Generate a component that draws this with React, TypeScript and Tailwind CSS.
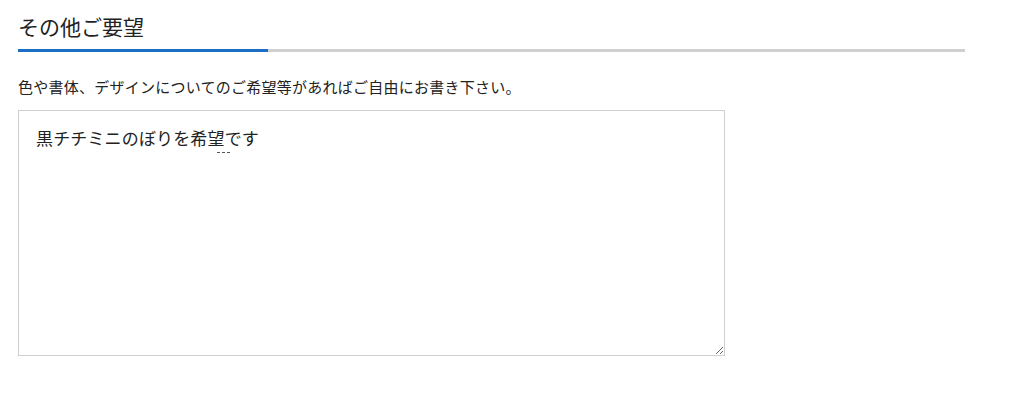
export default function App() {
  const jp = { fontFamily: '"Noto Sans CJK JP", "Noto Sans", sans-serif' };
  return (
    <div className="w-[1024px] h-[419px] bg-white text-[#333]" style={jp}>
      <div className="pl-[18px] pt-[12px] w-[965px]">
        <h2 className="text-[21px] leading-[28px] font-normal text-[#222] pb-[9px]">その他ご要望</h2>
        <div className="flex h-[3px]">
          <div className="w-[250px] bg-[#1b6ec2]" />
          <div className="flex-1 bg-[#cfcfcf]" />
        </div>
        <p className="mt-[25px] text-[15px] leading-[20px] tracking-[0.25px] text-[#222]">
          色や書体、デザインについてのご希望等があればご自由にお書き下さい。
        </p>
        <div className="relative mt-[13px] w-[707px]">
          <textarea
            className="block w-[707px] h-[246px] border border-[#cfcfcf] pl-[17px] pr-[17px] pt-[14px] text-[17px] leading-[26px] tracking-[0.15px] text-[#222] outline-none resize"
            style={jp}
            defaultValue="黒チチミニのぼりを希望です"
          />
          {/* composition underline under the last converted kanji */}
          <div className="absolute left-[199px] top-[42px] w-[13px] border-t border-dashed border-[#555]" />
        </div>
      </div>
    </div>
  );
}
